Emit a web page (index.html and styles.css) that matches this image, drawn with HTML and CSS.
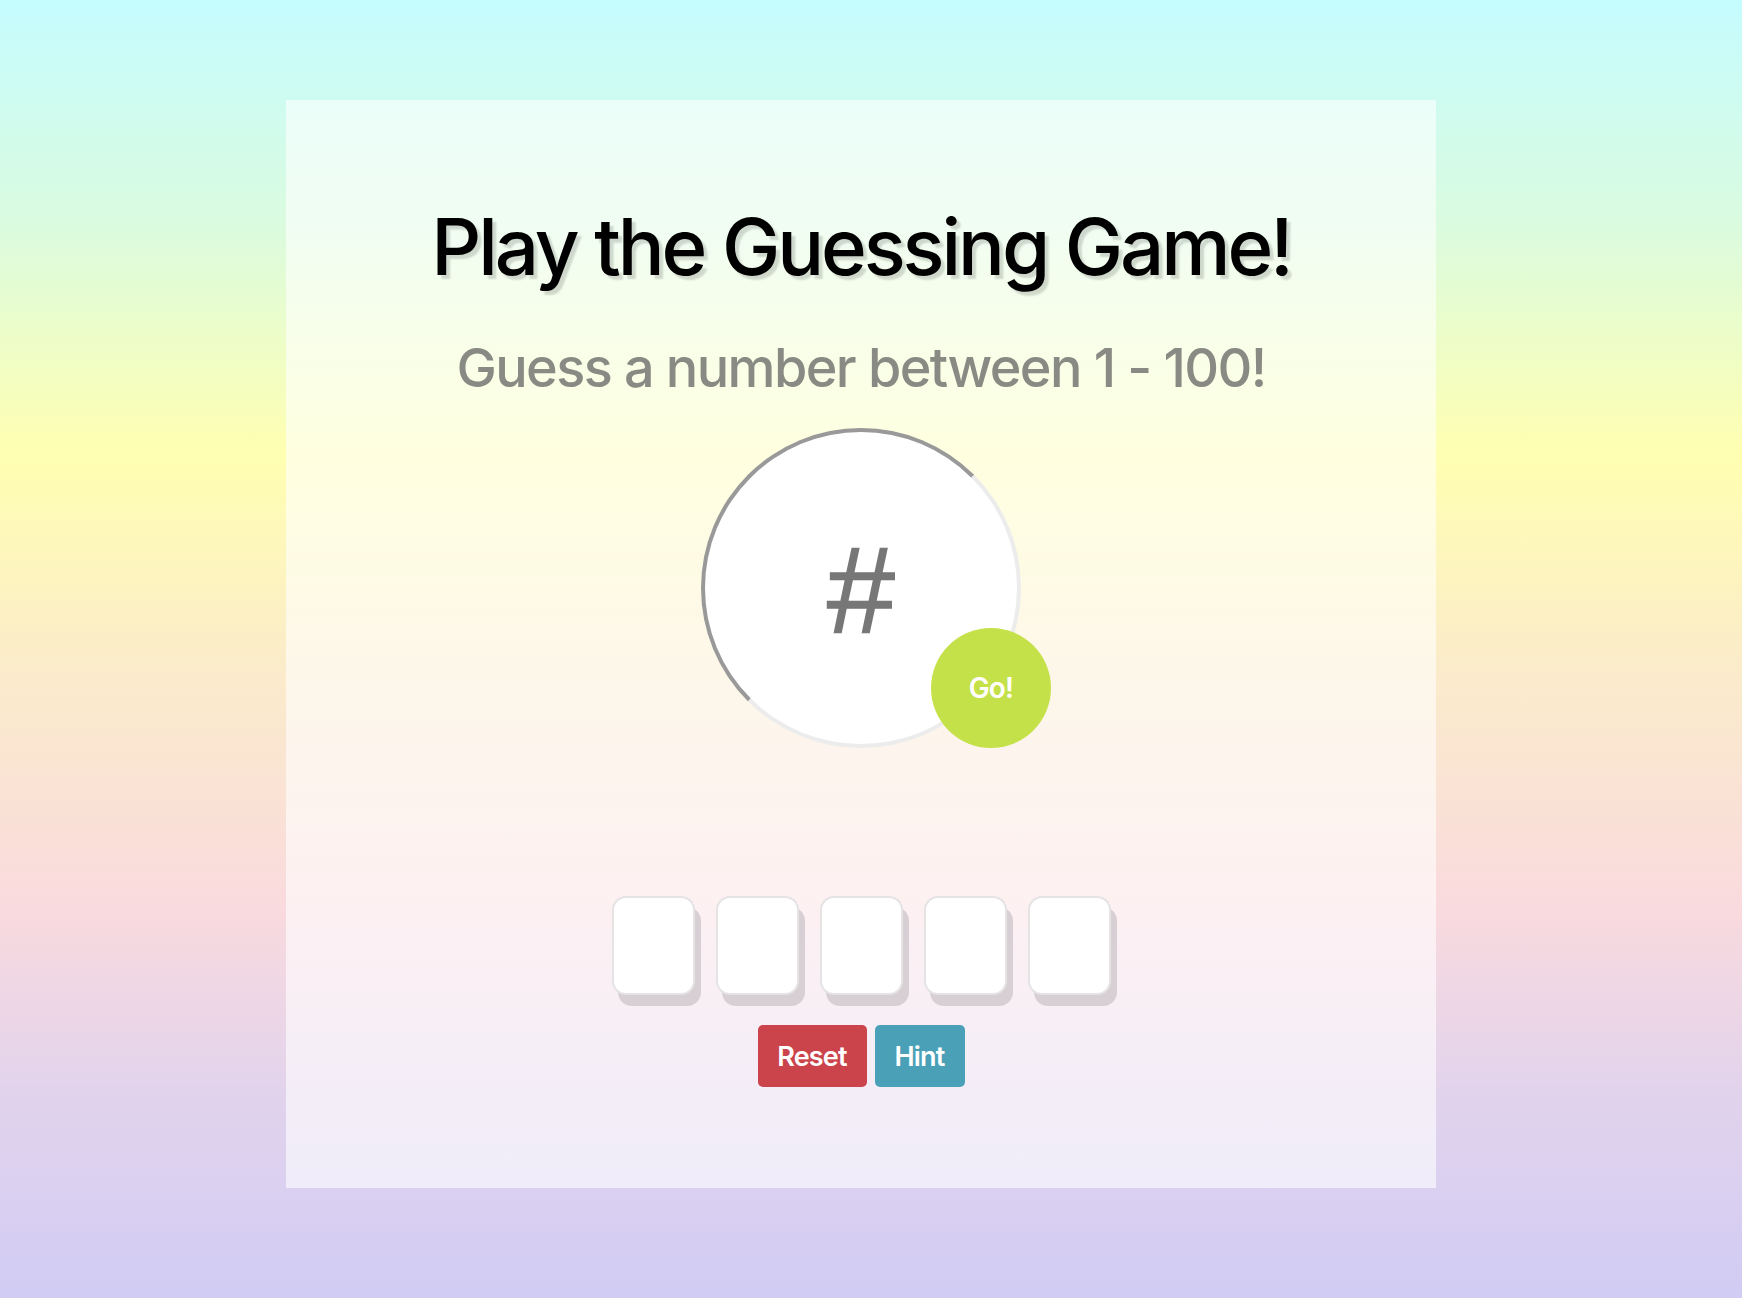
FILE: index.html
```html
<!DOCTYPE html>
<html lang="en">
<head>
<meta charset="utf-8">
<title>Guessing Game</title>
<link rel="stylesheet" href="styles.css">
</head>
<body>
<main class="panel">
  <h1 class="title">Play the Guessing Game!</h1>
  <p class="subtitle">Guess a number between 1 - 100!</p>
  <div class="dial">
    <div class="dial-ring"><span class="hash">#</span></div>
    <button class="go">Go!</button>
  </div>
  <div class="tiles">
    <div class="tile"></div>
    <div class="tile"></div>
    <div class="tile"></div>
    <div class="tile"></div>
    <div class="tile"></div>
  </div>
  <div class="actions">
    <button class="btn btn-reset">Reset</button>
    <button class="btn btn-hint">Hint</button>
  </div>
</main>
</body>
</html>
```
FILE: styles.css
```css
html, body {
  margin: 0;
  padding: 0;
}
body {
  width: 1742px;
  height: 1298px;
  overflow: hidden;
  font-family: Inter, "Noto Sans", sans-serif;
  background: linear-gradient(to bottom, #c5fcfe 0%, #dafbe0 17%, #ffffb1 35%, #fbebcb 52%, #f9dade 70%, #e2d3ec 84%, #d1ccf4 100%);
}
.panel {
  box-sizing: border-box;
  width: 1150px;
  height: 1088px;
  margin: 100px 0 0 286px;
  background: rgba(255, 255, 255, 0.6);
  display: flex;
  flex-direction: column;
  align-items: center;
  padding-top: 100px;
}
.title {
  margin: 0;
  font-size: 78px;
  line-height: 94px;
  font-weight: 500;
  letter-spacing: -3.1px;
  color: #000;
  text-shadow: 4px 4px 2px rgba(0, 0, 0, 0.15);
}
.subtitle {
  margin: 42px 0 0;
  font-size: 54px;
  line-height: 64px;
  font-weight: 500;
  letter-spacing: -1.6px;
  color: #898a83;
}
.dial {
  position: relative;
  width: 320px;
  height: 320px;
  margin-top: 28px;
}
.dial-ring {
  box-sizing: border-box;
  width: 320px;
  height: 320px;
  border-radius: 50%;
  background: #fff;
  border: 4px solid #ececec;
  border-top-color: #999;
  border-left-color: #999;
  display: flex;
  align-items: center;
  justify-content: center;
}
.hash {
  font-family: "Liberation Sans", Arial, sans-serif;
  font-size: 122px;
  line-height: 1;
  color: #777;
  -webkit-text-stroke: 1.5px #777;
  margin-top: 4px;
}
.go {
  position: absolute;
  left: 230px;
  top: 200px;
  width: 120px;
  height: 120px;
  border: none;
  border-radius: 50%;
  background: #c5e14a;
  color: #fff;
  font-family: Inter, sans-serif;
  font-size: 28px;
  font-weight: 600;
  letter-spacing: -0.8px;
  padding: 0;
}
.tiles {
  display: flex;
  gap: 21px;
  margin-top: 148px;
}
.tile {
  box-sizing: border-box;
  width: 83px;
  height: 99px;
  background: #fff;
  border: 2px solid #e6e3e4;
  border-radius: 14px;
  box-shadow: 6px 11px 0 #d7cfd4;
}
.actions {
  display: flex;
  gap: 8px;
  margin-top: 30px;
}
.btn {
  height: 62px;
  border: none;
  border-radius: 5px;
  color: #fff;
  font-family: Inter, sans-serif;
  font-size: 27px;
  font-weight: 600;
  letter-spacing: -0.8px;
  padding: 0;
}
.btn-reset {
  width: 109px;
  background: #cc444b;
}
.btn-hint {
  width: 90px;
  background: #4aa1b7;
}
```
